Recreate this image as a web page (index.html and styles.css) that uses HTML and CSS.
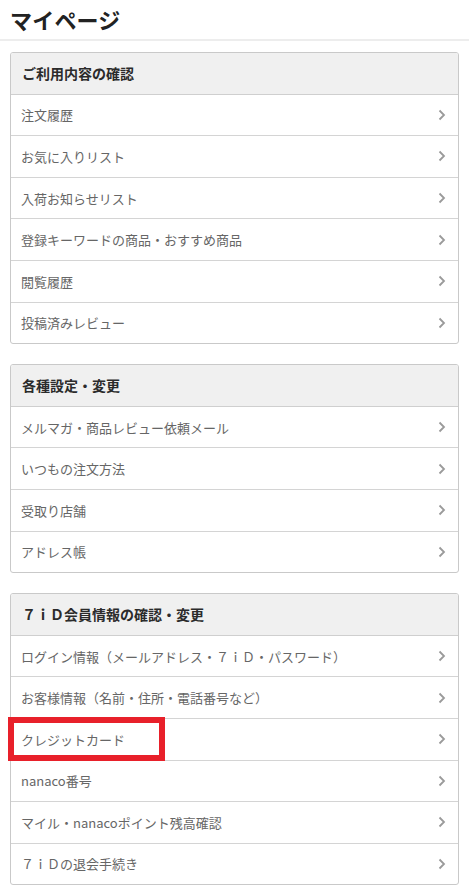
FILE: index.html
```html
<!DOCTYPE html>
<html lang="ja">
<head>
<meta charset="utf-8">
<title>マイページ</title>
<link rel="stylesheet" href="styles.css">
</head>
<body>
<header class="page-head">
  <h1 class="page-title">マイページ</h1>
</header>
<main class="content">
  <section class="card">
    <h2 class="card-title">ご利用内容の確認</h2>
    <ul class="menu">
      <li class="menu-item"><span>注文履歴</span><svg class="chev" viewBox="0 0 8 12"><path d="M1.5 1.5 L6 6 L1.5 10.5"/></svg></li>
      <li class="menu-item"><span>お気に入りリスト</span><svg class="chev" viewBox="0 0 8 12"><path d="M1.5 1.5 L6 6 L1.5 10.5"/></svg></li>
      <li class="menu-item"><span>入荷お知らせリスト</span><svg class="chev" viewBox="0 0 8 12"><path d="M1.5 1.5 L6 6 L1.5 10.5"/></svg></li>
      <li class="menu-item"><span>登録キーワードの商品・おすすめ商品</span><svg class="chev" viewBox="0 0 8 12"><path d="M1.5 1.5 L6 6 L1.5 10.5"/></svg></li>
      <li class="menu-item"><span>閲覧履歴</span><svg class="chev" viewBox="0 0 8 12"><path d="M1.5 1.5 L6 6 L1.5 10.5"/></svg></li>
      <li class="menu-item"><span>投稿済みレビュー</span><svg class="chev" viewBox="0 0 8 12"><path d="M1.5 1.5 L6 6 L1.5 10.5"/></svg></li>
    </ul>
  </section>
  <section class="card">
    <h2 class="card-title">各種設定・変更</h2>
    <ul class="menu">
      <li class="menu-item"><span>メルマガ・商品レビュー依頼メール</span><svg class="chev" viewBox="0 0 8 12"><path d="M1.5 1.5 L6 6 L1.5 10.5"/></svg></li>
      <li class="menu-item"><span>いつもの注文方法</span><svg class="chev" viewBox="0 0 8 12"><path d="M1.5 1.5 L6 6 L1.5 10.5"/></svg></li>
      <li class="menu-item"><span>受取り店舗</span><svg class="chev" viewBox="0 0 8 12"><path d="M1.5 1.5 L6 6 L1.5 10.5"/></svg></li>
      <li class="menu-item"><span>アドレス帳</span><svg class="chev" viewBox="0 0 8 12"><path d="M1.5 1.5 L6 6 L1.5 10.5"/></svg></li>
    </ul>
  </section>
  <section class="card">
    <h2 class="card-title">７ｉＤ会員情報の確認・変更</h2>
    <ul class="menu">
      <li class="menu-item"><span>ログイン情報（メールアドレス・７ｉＤ・パスワード）</span><svg class="chev" viewBox="0 0 8 12"><path d="M1.5 1.5 L6 6 L1.5 10.5"/></svg></li>
      <li class="menu-item"><span>お客様情報（名前・住所・電話番号など）</span><svg class="chev" viewBox="0 0 8 12"><path d="M1.5 1.5 L6 6 L1.5 10.5"/></svg></li>
      <li class="menu-item highlighted"><span>クレジットカード</span><svg class="chev" viewBox="0 0 8 12"><path d="M1.5 1.5 L6 6 L1.5 10.5"/></svg></li>
      <li class="menu-item"><span>nanaco番号</span><svg class="chev" viewBox="0 0 8 12"><path d="M1.5 1.5 L6 6 L1.5 10.5"/></svg></li>
      <li class="menu-item"><span>マイル・nanacoポイント残高確認</span><svg class="chev" viewBox="0 0 8 12"><path d="M1.5 1.5 L6 6 L1.5 10.5"/></svg></li>
      <li class="menu-item"><span>７ｉＤの退会手続き</span><svg class="chev" viewBox="0 0 8 12"><path d="M1.5 1.5 L6 6 L1.5 10.5"/></svg></li>
    </ul>
  </section>
</main>
</body>
</html>
```

FILE: styles.css
```css
*, *::before, *::after { box-sizing: border-box; }
html, body {
  margin: 0;
  padding: 0;
  background: #fff;
}
body {
  font-family: "Noto Sans CJK JP", "Noto Sans", sans-serif;
  color: #333;
}
.page-head {
  height: 41px;
  border-bottom: 2px solid #ededed;
  padding-left: 10px;
}
.page-title {
  margin: 0;
  font-size: 22px;
  line-height: 39px;
  font-weight: bold;
  color: #222;
  letter-spacing: 0.2px;
}
.content {
  padding: 11px 10px 0 10px;
  display: flex;
  flex-direction: column;
  gap: 20px;
}
.card {
  border: 1px solid #c9c9c9;
  border-radius: 3px;
}
.card-title {
  margin: 0;
  height: 41.6px;
  display: flex;
  align-items: center;
  padding-left: 11px;
  background: #f0f0f0;
  border-radius: 2px 2px 0 0;
  font-size: 14px;
  font-weight: bold;
  color: #2b2b2b;
  border-bottom: 1px solid #cfcfcf;
}
.menu {
  list-style: none;
  margin: 0;
  padding: 0;
}
.menu-item {
  position: relative;
  height: 41.6px;
  display: flex;
  align-items: center;
  justify-content: space-between;
  padding: 0 12px 0 10px;
  font-size: 13px;
  color: #666;
  border-bottom: 1px solid #d4d4d4;
}
.menu-item:last-child {
  border-bottom: none;
  height: 40.6px;
}
.chev {
  width: 8px;
  height: 12px;
  fill: none;
  stroke: #9a9a9a;
  stroke-width: 1.8;
}
.highlighted::after {
  content: "";
  position: absolute;
  left: -3px;
  top: -2px;
  width: 157px;
  height: 44px;
  border: 6px solid #e8202a;
  pointer-events: none;
}
```
